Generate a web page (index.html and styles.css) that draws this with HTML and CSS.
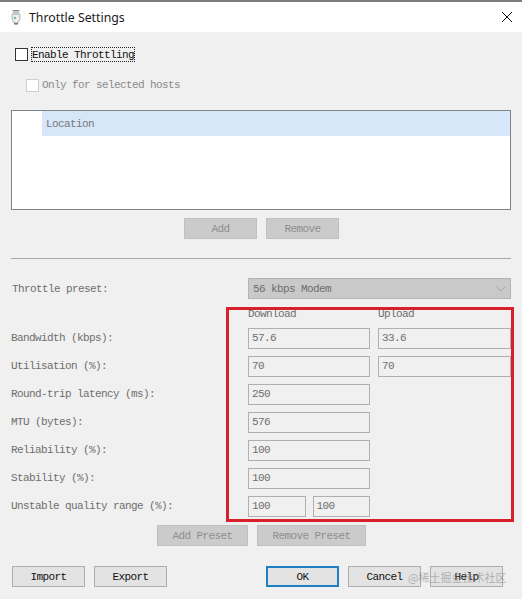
FILE: index.html
```html
<!DOCTYPE html>
<html lang="en">
<head>
<meta charset="utf-8">
<title>Throttle Settings</title>
<link rel="stylesheet" href="styles.css">
</head>
<body>
<div class="dialog">
  <header class="titlebar">
    <svg class="app-icon" width="12" height="16" viewBox="0 0 12 16">
      <path d="M2 1h8l-1 2.5 1.500 2v5l-2 3.500-1 1.500H4.500l-1-1.500-2-3.500v-5l1.500-2z" fill="#c4c8c4"/>
      <path d="M3 6h6v5l-2 2H5l-2-2z" fill="#eef1ee"/>
      <circle cx="5" cy="9" r="1.300" fill="#7fbb9c"/>
      <path d="M4 14h4v1.500H4z" fill="#7b7e7b"/>
      <path d="M3 1.500h6" stroke="#8a8a8a" stroke-width="1"/>
    </svg>
    <span class="title">Throttle Settings</span>
    <svg class="close" width="10" height="10" viewBox="0 0 10 10">
      <path d="M0 0l10 10M10 0L0 10" stroke="#111" stroke-width="1" fill="none"/>
    </svg>
  </header>

  <main class="content">
    <div class="check-row">
      <span class="checkbox"></span>
      <span class="check-label">Enable Throttling</span>
    </div>
    <div class="check-row sub">
      <span class="checkbox disabled"></span>
      <span class="sub-label">Only for selected hosts</span>
    </div>

    <div class="table">
      <div class="table-head">
        <div class="corner"></div>
        <div class="head-cell">Location</div>
      </div>
    </div>

    <div class="actions table-actions">
      <button class="btn off w73">Add</button>
      <button class="btn off w73">Remove</button>
    </div>

    <hr class="sep">

    <div class="preset-row">
      <span class="preset-label">Throttle preset:</span>
      <div class="select">
        <span>56 kbps Modem</span>
        <svg width="10" height="6" viewBox="0 0 10 6"><path d="M0.500 0.500L5 5l4.500-4.500" stroke="#a4a4a4" fill="none"/></svg>
      </div>
    </div>

    <div class="form">
      <span></span><span class="col-head">Download</span><span class="col-head">Upload</span>

      <span class="lbl">Bandwidth (kbps):</span>
      <span class="input">57.6</span><span class="input wide">33.6</span>

      <span class="lbl">Utilisation (%):</span>
      <span class="input">70</span><span class="input wide">70</span>

      <span class="lbl">Round-trip latency (ms):</span>
      <span class="input">250</span><span></span>

      <span class="lbl">MTU (bytes):</span>
      <span class="input">576</span><span></span>

      <span class="lbl">Reliability (%):</span>
      <span class="input">100</span><span></span>

      <span class="lbl">Stability (%):</span>
      <span class="input">100</span><span></span>

      <span class="lbl">Unstable quality range (%):</span>
      <div class="pair"><span class="input">100</span><span class="input">100</span></div><span></span>
    </div>

    <div class="actions preset-actions">
      <button class="btn off w91">Add Preset</button>
      <button class="btn off w109">Remove Preset</button>
    </div>

    <footer class="footer">
      <div class="foot-group">
        <button class="btn w73">Import</button>
        <button class="btn w73">Export</button>
      </div>
      <div class="foot-group">
        <button class="btn w73 primary">OK</button>
        <button class="btn w73">Cancel</button>
        <button class="btn w73">Help</button>
      </div>
    </footer>
  </main>

  <div class="highlight"></div>
  <div class="watermark">@稀土掘金技术社区</div>
</div>
</body>
</html>
```

FILE: styles.css
```css
* { box-sizing: border-box; }

html, body {
  margin: 0;
  padding: 0;
  width: 522px;
  height: 599px;
  overflow: hidden;
  background: #f0f0f0;
}

.dialog {
  position: relative;
  width: 522px;
  height: 599px;
  font-family: "Liberation Mono", "Noto Sans CJK SC", monospace;
  font-size: 11px;
  letter-spacing: -0.6px;
  color: #6e6e6e;
}

.titlebar {
  display: flex;
  align-items: center;
  height: 32px;
  padding: 0 10px 0 10px;
  background: #fff;
  border-top: 2px solid #7d7d7d;
  font-family: "Noto Sans", sans-serif;
  letter-spacing: 0;
}

.app-icon { margin-right: 7px; }

.title {
  font-size: 12.3px;
  color: #1a1a1a;
  flex: 1;
}

.close { margin-top: -1px; }

.content {
  display: flex;
  flex-direction: column;
  padding: 15px 0 0 11px;
}

.check-row {
  display: flex;
  align-items: center;
  height: 15px;
  padding-left: 4px;
  gap: 3px;
}

.check-row.sub {
  margin-top: 16px;
  padding-left: 15px;
  gap: 3px;
}

.checkbox {
  width: 13px;
  height: 13px;
  background: #fff;
  border: 1px solid #333;
}

.checkbox.disabled { border-color: #cfcfcf; }

.check-label {
  color: #111;
  border: 1px dotted #222;
  height: 15px;
  line-height: 14px;
  padding: 0;
}

.sub-label {
  color: #8a8a8a;
  padding-bottom: 2px;
}

.table {
  width: 500px;
  height: 100px;
  margin-top: 17px;
  background: #fff;
  border: 1px solid #7f8488;
}

.table-head {
  display: flex;
  height: 25px;
}

.corner { width: 30px; background: #fff; }

.head-cell {
  flex: 1;
  background: #d5e7f9;
  padding: 1px 0 0 4px;
  line-height: 25px;
  color: #777;
}

.actions {
  display: flex;
  gap: 9px;
}

.table-actions {
  margin-top: 8px;
  padding-left: 173px;
}

.btn {
  height: 21px;
  padding: 0;
  font: inherit;
  letter-spacing: inherit;
  color: #111;
  background: #e3e3e3;
  border: 1px solid #adadad;
}

.btn.off {
  background: #cbcbcb;
  border-color: #c0c0c0;
  color: #8e8e8e;
}

.btn.primary {
  border: 2px solid #1f7fc4;
}

.w73 { width: 73px; }
.w91 { width: 91px; }
.w109 { width: 109px; }

.sep {
  width: 500px;
  height: 1px;
  margin: 19px 0 0;
  border: 0;
  background: #a8a8a8;
}

.preset-row {
  display: flex;
  align-items: center;
  margin-top: 19px;
  padding-left: 1px;
}

.preset-label { width: 236px; }

.select {
  display: flex;
  align-items: center;
  justify-content: space-between;
  width: 263px;
  height: 21px;
  padding: 0 4px;
  background: #c9c9c9;
  border: 1px solid #b4b4b4;
}

.form {
  display: grid;
  grid-template-columns: 237px 130px 133px;
  grid-template-rows: 14px repeat(7, 21px);
  row-gap: 7px;
  margin-top: 8px;
}

.col-head {
  line-height: 14px;
}

.lbl { line-height: 21px; }

.input {
  display: block;
  width: 122px;
  height: 21px;
  line-height: 19px;
  padding-left: 3px;
  background: #f0f0f0;
  border: 1px solid #b0b0b0;
}

.input.wide { width: 133px; }

.pair {
  display: flex;
  gap: 7px;
  width: 122px;
}

.pair .input { flex: 1; width: auto; }

.preset-actions {
  margin-top: 8px;
  padding-left: 146px;
}

.footer {
  display: flex;
  gap: 99px;
  margin-top: 20px;
  padding-left: 1px;
}

.foot-group {
  display: flex;
  gap: 9px;
}

.highlight {
  position: absolute;
  left: 226px;
  top: 307px;
  width: 288px;
  height: 215px;
  border: 3px solid #d8202c;
  pointer-events: none;
}

.watermark {
  position: absolute;
  left: 408px;
  top: 569px;
  font-family: "Noto Sans CJK SC", sans-serif;
  font-size: 11px;
  letter-spacing: 0;
  color: rgba(120, 120, 120, 0.5);
  white-space: nowrap;
}
```
